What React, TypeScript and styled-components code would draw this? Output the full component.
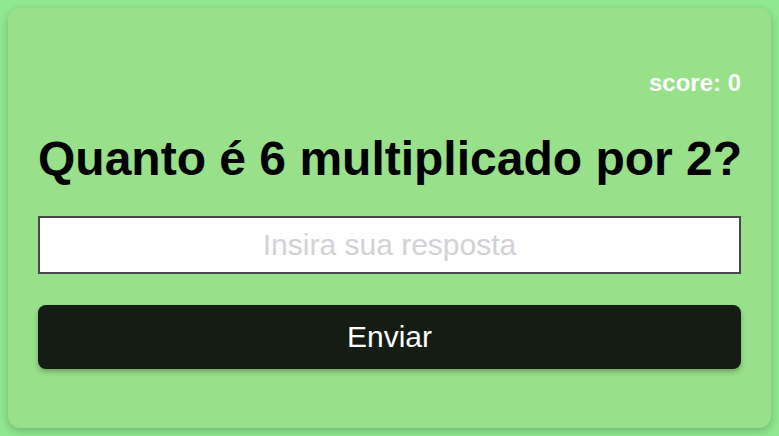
import React from "react";
import styled, { createGlobalStyle } from "styled-components";

const Global = createGlobalStyle`
  html, body { margin: 0; padding: 0; }
  body {
    background: #90e890;
    font-family: "Liberation Sans", Arial, sans-serif;
  }
  #root { padding: 8px; }
`;

const Card = styled.main`
  box-sizing: border-box;
  height: 420px;
  background: #98e08a;
  border-radius: 12px;
  box-shadow: 0 3px 8px rgba(0, 0, 0, 0.22);
  padding: 30px;
  display: flex;
  flex-direction: column;
`;

const Score = styled.div`
  margin-top: 31px;
  align-self: flex-end;
  color: #ffffff;
  font-weight: 700;
  font-size: 24px;
  line-height: 28px;
`;

const Question = styled.h1`
  margin: 34px 0 0;
  color: #000;
  font-weight: 700;
  font-size: 48px;
  line-height: 55px;
  white-space: nowrap;
`;

const AnswerInput = styled.input`
  box-sizing: border-box;
  margin-top: 30px;
  width: 100%;
  height: 58px;
  border: 2px solid #45494a;
  background: #fff;
  font-family: "Liberation Sans", Arial, sans-serif;
  font-size: 30px;
  text-align: center;
  outline: none;
  &::placeholder { color: #d1d3d6; }
`;

const SubmitButton = styled.button`
  margin-top: 31px;
  width: 100%;
  height: 64px;
  border: none;
  border-radius: 8px;
  background: #141c14;
  color: #fff;
  font-family: "Liberation Sans", Arial, sans-serif;
  font-size: 30px;
  box-shadow: 0 3px 5px rgba(0, 0, 0, 0.25);
  cursor: pointer;
`;

export default function App() {
  return (
    <>
      <Global />
      <Card>
        <Score>score: 0</Score>
        <Question>Quanto é 6 multiplicado por 2?</Question>
        <AnswerInput placeholder="Insira sua resposta" />
        <SubmitButton>Enviar</SubmitButton>
      </Card>
    </>
  );
}
